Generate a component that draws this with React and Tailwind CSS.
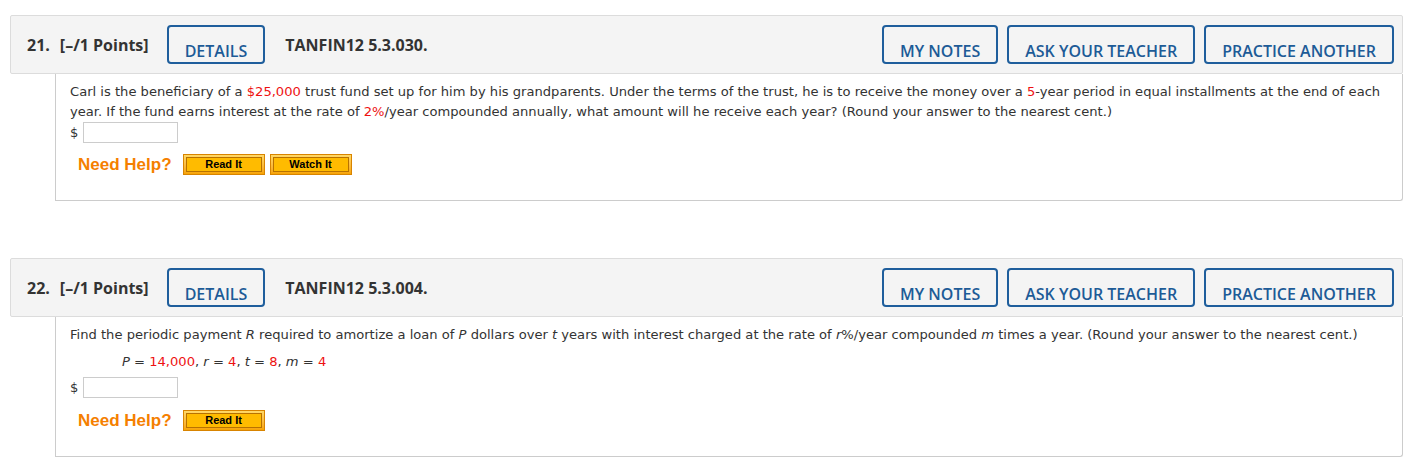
import React from "react";

const RED = "text-[#ee1111]";

function BlueBtn({ children }) {
  return (
    <div className="h-[39px] border-2 border-[#1f5e9c] rounded-[4px] px-[16px] pt-[13px] text-[16px] leading-[22px] font-semibold text-[#1d5b97] whitespace-nowrap bg-[#f4f4f4] overflow-hidden">
      {children}
    </div>
  );
}

function HelpBtn({ children }) {
  return (
    <div className="w-[82px] h-[21px] border border-[#d88400] bg-gradient-to-b from-[#ffd866] to-[#f7a400] p-[2px]">
      <div className="h-full border border-[#b87200] bg-[#ffbb00] flex items-center justify-center text-[11px] font-bold text-black leading-none" style={{ fontFamily: '"Liberation Sans", Arial, sans-serif' }}>
        {children}
      </div>
    </div>
  );
}

function Header({ num, code }) {
  return (
    <div className="h-[59px] bg-[#f4f4f4] border border-[#dcdcdc] rounded-[2px] flex items-start pt-[9px] pl-[16px] pr-[8px]" style={{ fontFamily: '"Open Sans", sans-serif' }}>
      <div className="h-[39px] flex items-center text-[16px] leading-[22px] font-bold text-[#333]">
        <span>{num}.</span>
        <span className="ml-[10px]">[–/1 Points]</span>
      </div>
      <div className="ml-[18px]">
        <BlueBtn>DETAILS</BlueBtn>
      </div>
      <div className="ml-[20px] h-[39px] flex items-center text-[16px] leading-[22px] font-bold text-[#333]">{code}</div>
      <div className="ml-auto flex gap-[9px]">
        <BlueBtn>MY NOTES</BlueBtn>
        <BlueBtn>ASK YOUR TEACHER</BlueBtn>
        <BlueBtn>PRACTICE ANOTHER</BlueBtn>
      </div>
    </div>
  );
}

function Answer() {
  return (
    <div className="flex items-center h-[21px]">
      <span className="w-[13px]">$</span>
      <div className="w-[95px] h-[21px] border border-[#cccccc] bg-white" />
    </div>
  );
}

function NeedHelp({ watch, top }) {
  return (
    <div className={"flex items-center ml-[8px] " + (top === 11 ? "mt-[11px]" : "mt-[12px]")}>
      <span className="text-[17px] font-bold text-[#f57f00] leading-none mr-[11px]" style={{ fontFamily: '"Liberation Sans", Arial, sans-serif' }}>
        Need Help?
      </span>
      <HelpBtn>Read It</HelpBtn>
      {watch && (
        <div className="ml-[5px]">
          <HelpBtn>Watch It</HelpBtn>
        </div>
      )}
    </div>
  );
}

export default function App() {
  return (
    <div className="w-[1413px] min-h-[469px] bg-white pt-[15px] pl-[10px] pr-[10px]">
      <Header num="21" code="TANFIN12 5.3.030." />
      <div className="ml-[45px] border-l border-r border-b border-[#cccccc] rounded-br-[3px] pl-[14px] pr-[12px] pt-[8px] pb-[25px] text-[13.1px] leading-[20px] text-[#333]" style={{ fontFamily: '"DejaVu Sans", Verdana, sans-serif' }}>
        <p>
          Carl is the beneficiary of a <span className={RED}>$25,000</span> trust fund set up for him by his grandparents. Under the terms of the trust, he is to receive the money over a <span className={RED}>5</span>-year period in equal installments at the end of each year. If the fund earns interest at the rate of <span className={RED}>2%</span>/year compounded annually, what amount will he receive each year? (Round your answer to the nearest cent.)
        </p>
        <Answer />
        <NeedHelp watch top={11} />
      </div>

      <div className="mt-[57px]">
        <Header num="22" code="TANFIN12 5.3.004." />
        <div className="ml-[45px] border-l border-r border-b border-[#cccccc] rounded-br-[3px] pl-[14px] pr-[12px] pt-[8px] pb-[25px] text-[13.1px] leading-[20px] text-[#333]" style={{ fontFamily: '"DejaVu Sans", Verdana, sans-serif' }}>
          <p>
            Find the periodic payment <i>R</i> required to amortize a loan of <i>P</i> dollars over <i>t</i> years with interest charged at the rate of <i>r</i>%/year compounded <i>m</i> times a year. (Round your answer to the nearest cent.)
          </p>
          <p className="mt-[7px] ml-[52px]">
            <i>P</i> = <span className={RED}>14,000</span>, <i>r</i> = <span className={RED}>4</span>, <i>t</i> = <span className={RED}>8</span>, <i>m</i> = <span className={RED}>4</span>
          </p>
          <div className="mt-[5px]">
            <Answer />
          </div>
          <NeedHelp />
        </div>
      </div>
    </div>
  );
}
